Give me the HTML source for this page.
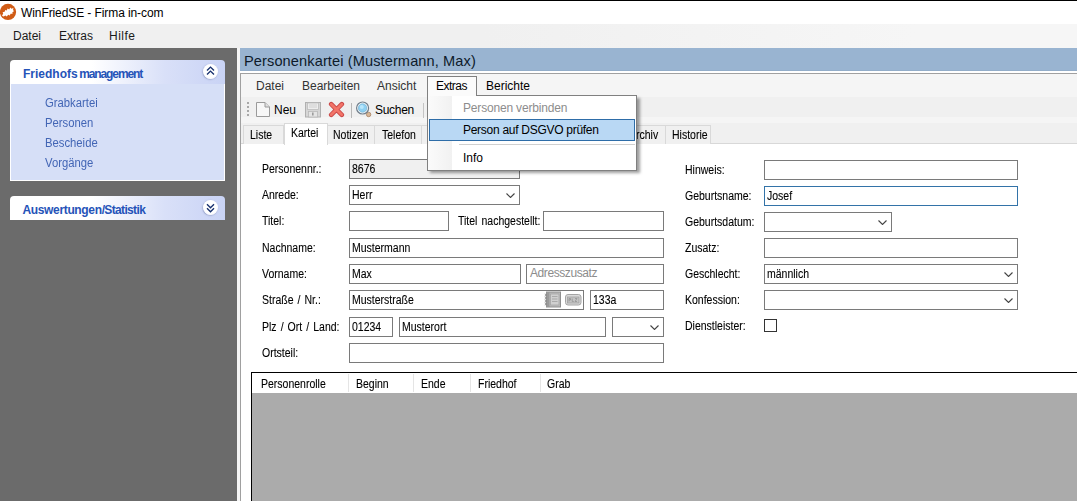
<!DOCTYPE html>
<html><head><meta charset="utf-8">
<style>
*{box-sizing:border-box;margin:0;padding:0}
html,body{width:1077px;height:501px;overflow:hidden;background:#fff;font-family:"Liberation Sans",sans-serif;color:#000}
.a{position:absolute}
.t{position:absolute;white-space:pre;line-height:1}
.ui{font-size:12px;color:#1a1a1a}
.ms{font-size:12px;letter-spacing:0;word-spacing:1.3px;color:#000;transform:scaleX(.875);transform-origin:0 0;-webkit-text-stroke:0.1px #000}
.box{position:absolute;border:1px solid #7a7a7a;background:#fff;height:20px}
.chev{position:absolute;width:9px;height:5px}
</style></head><body>
<!-- title bar -->
<div class="a" style="left:0;top:0;width:1077px;height:1px;background:#000"></div>
<div class="a" style="left:0;top:1px;width:1077px;height:23px;background:#fff"></div>
<svg class="a" style="left:-1px;top:3px" width="19" height="19" viewBox="0 0 19 19">
<circle cx="9" cy="8.9" r="8.1" fill="#d05c16"/>
<path d="M3 12.8 L4.2 10.5 L3.6 9.2 L5.6 8.8 L6.3 7 L7.8 7.6 L8.6 5.6 L10.2 6.4 L11.3 4.6 L12.4 5.8 L14.4 5 L14 7.2 L15.2 8 L13.4 9.2 L13.6 10.8 L11.6 10.8 L10.8 12.4 L9.2 11.8 L7.8 13.4 L6.4 12.6 L4.6 13.6 Z" fill="#fff"/>
</svg>
<div class="t ui" style="left:21px;top:7px;font-size:12px;color:#000;letter-spacing:-0.09px">WinFriedSE - Firma in-com</div>
<!-- main menu -->
<div class="a" style="left:0;top:24px;width:1077px;height:24px;background:linear-gradient(90deg,#f0f0f0 0%,#f0f0f0 45%,#f6f6f6 85%,#f6f6f6 100%)"></div>
<div class="t ui" style="left:13px;top:30px">Datei</div>
<div class="t ui" style="left:59px;top:30px">Extras</div>
<div class="t ui" style="left:109px;top:30px;letter-spacing:0.5px">Hilfe</div>

<!-- left panel -->
<div class="a" style="left:0;top:48px;width:237px;height:453px;background:#6b6b6b"></div>
<div class="a" style="left:237px;top:48px;width:3px;height:453px;background:#f4f4f4"></div>

<!-- panel 1 -->
<div class="a" style="left:10px;top:60px;width:215px;height:24px;border-radius:4px 4px 0 0;background:linear-gradient(90deg,#fff 0%,#fff 38%,#d9e0f8 72%,#c9d3f5 100%)"></div>
<div class="t" style="left:23px;top:68px;font-size:12px;font-weight:bold;color:#2553b8">Friedhofs<span style="letter-spacing:-1.1px;margin-left:1.5px">management</span></div>
<div class="a" style="left:203px;top:64px;width:15px;height:15px;border-radius:50%;background:radial-gradient(circle at 50% 45%,#fff 55%,#eef0fa 100%);box-shadow:-0.5px 0.5px 1.5px rgba(90,100,150,.55)"></div>
<svg class="a" style="left:196px;top:58px" width="30" height="28" viewBox="196 58 30 28"><path d="M207 70.6 L210.5 67.1 L214 70.6 M207 74.6 L210.5 71.1 L214 74.6" stroke="#17306e" stroke-width="1.35" fill="none"/></svg>
<div class="a" style="left:10px;top:84px;width:215px;height:97px;background:#d6dff7;border:1px solid #fff;border-top:none"></div>
<div class="t" style="left:45px;top:97px;font-size:12px;color:#4265b5;transform:scaleX(.94);transform-origin:0 0">Grabkartei</div>
<div class="t" style="left:45px;top:117px;font-size:12px;color:#4265b5;transform:scaleX(.94);transform-origin:0 0">Personen</div>
<div class="t" style="left:45px;top:137px;font-size:12px;color:#4265b5;transform:scaleX(.94);transform-origin:0 0">Bescheide</div>
<div class="t" style="left:45px;top:157px;font-size:12px;color:#4265b5;transform:scaleX(.94);transform-origin:0 0">Vorgänge</div>

<!-- panel 2 -->
<div class="a" style="left:10px;top:196px;width:215px;height:24px;border-radius:4px 4px 0 0;background:linear-gradient(90deg,#fff 0%,#fff 38%,#d9e0f8 72%,#c9d3f5 100%)"></div>
<div class="t" style="left:22.5px;top:204px;font-size:12px;font-weight:bold;color:#2553b8"><span style="letter-spacing:-0.35px">Auswertungen</span><span style="letter-spacing:-0.65px">/Statistik</span></div>
<div class="a" style="left:203px;top:200px;width:15px;height:15px;border-radius:50%;background:radial-gradient(circle at 50% 45%,#fff 55%,#eef0fa 100%);box-shadow:-0.5px 0.5px 1.5px rgba(90,100,150,.55)"></div>
<svg class="a" style="left:196px;top:194px" width="30" height="28" viewBox="196 194 30 28"><path d="M207 204.2 L210.5 207.7 L214 204.2 M207 208.2 L210.5 211.7 L214 208.2" stroke="#17306e" stroke-width="1.35" fill="none"/></svg>

<!-- right: caption -->
<div class="a" style="left:240px;top:48px;width:837px;height:23px;background:#99b4d1"></div>
<div class="t" style="left:244px;top:53.5px;font-size:14.6px;letter-spacing:0.1px;color:#0d1a2a">Personenkartei (Mustermann, Max)</div>
<div class="a" style="left:240px;top:70px;width:837px;height:1px;background:#93adc9"></div>
<div class="a" style="left:240px;top:71px;width:837px;height:2px;background:#fff"></div>
<!-- inner panel -->
<div class="a" style="left:240px;top:73px;width:837px;height:428px;background:#fff;border-left:1px solid #a0a0a0;border-top:1px solid #a0a0a0"></div>
<div class="a" style="left:241px;top:74px;width:836px;height:23px;background:#f5f5f5"></div>
<div class="t ui" style="left:256px;top:80px;color:#333">Datei</div>
<div class="t ui" style="left:302px;top:80px;color:#333">Bearbeiten</div>
<div class="t ui" style="left:377px;top:80px;color:#333">Ansicht</div>
<div class="t ui" style="left:486px;top:80px;color:#000">Berichte</div>
<!-- toolbar -->
<div class="a" style="left:241px;top:97px;width:836px;height:26px;background:#f0f0f0"></div>
<!-- tab strip -->
<div class="a" style="left:241px;top:117px;width:836px;height:8px;background:#f5f5f5"></div>
<div class="a" style="left:241px;top:123px;width:836px;height:21px;background:#f0f0f0"></div>
<div class="a" style="left:241px;top:143px;width:836px;height:1px;background:#d8d8d8"></div>
<!-- content -->
<div class="a" style="left:241px;top:144px;width:836px;height:357px;background:#fff"></div>


<!-- toolbar items -->
<div class="a" style="left:247px;top:102px;width:2px;height:2px;background:#a8a8a8"></div>
<div class="a" style="left:247px;top:106px;width:2px;height:2px;background:#a8a8a8"></div>
<div class="a" style="left:247px;top:110px;width:2px;height:2px;background:#a8a8a8"></div>
<div class="a" style="left:247px;top:114px;width:2px;height:2px;background:#a8a8a8"></div>
<svg class="a" style="left:255px;top:101px" width="16" height="17" viewBox="0 0 16 17">
<path d="M1.5 1.5 H10 L14.5 6 V15.5 H1.5 Z" fill="#f7f7f7" stroke="#9a9a9a"/>
<path d="M10 1.5 V6 H14.5" fill="#e0e0e0" stroke="#9a9a9a"/>
</svg>
<div class="t ui" style="left:274px;top:104px;color:#000">Neu</div>
<svg class="a" style="left:304px;top:101px" width="17" height="17" viewBox="0 0 17 17">
<rect x="1.5" y="1.5" width="15" height="14.5" fill="#d6d6d6" stroke="#b0b0b0"/>
<rect x="3.5" y="2" width="11" height="6.5" fill="#ededed" stroke="#bcbcbc" stroke-width="0.8"/>
<path d="M5 4 H13 M5 6 H13" stroke="#c8c8c8" stroke-width="0.8"/>
<rect x="4.5" y="10.5" width="9" height="5.5" fill="#e4e4e4" stroke="#b8b8b8" stroke-width="0.8"/>
<rect x="8" y="11.5" width="1.6" height="3" fill="#9c9c9c"/>
</svg>
<svg class="a" style="left:328px;top:101px" width="17" height="17" viewBox="0 0 17 17">
<path d="M3.2 3.2 L13.8 13.8 M13.8 3.2 L3.2 13.8" stroke="#c94848" stroke-width="4.6" stroke-linecap="round"/>
<path d="M3.2 3.2 L13.8 13.8 M13.8 3.2 L3.2 13.8" stroke="#f27468" stroke-width="2.8" stroke-linecap="round"/>
</svg>
<div class="a" style="left:351px;top:103px;width:1px;height:15px;background:#b8b8b8"></div>
<svg class="a" style="left:355px;top:101px" width="18" height="18" viewBox="0 0 18 18">
<circle cx="13.6" cy="13.5" r="2.2" fill="#d8b898" stroke="#a88060" stroke-width="0.8"/>
<circle cx="7.6" cy="7" r="6" fill="#fff" stroke="#6f7d8a" stroke-width="1.2"/>
<circle cx="7.6" cy="7" r="4.3" fill="#8ed0f2" stroke="#6aa6c8" stroke-width="0.6"/>
<circle cx="6.8" cy="6" r="2" fill="#b8e6fb"/>
</svg>
<div class="t ui" style="left:375px;top:104px;color:#000;letter-spacing:-0.3px">Suchen</div>
<div class="a" style="left:423px;top:103px;width:1px;height:15px;background:#c4c4c4"></div>

<!-- tabs -->
<div class="a" style="left:243px;top:125px;width:41px;height:19px;background:#f0f0f0;border:1px solid #d9d9d9;border-bottom:none"></div>
<div class="t ms" style="left:250px;top:129px">Liste</div>
<div class="a" style="left:328px;top:125px;width:47px;height:19px;background:#f0f0f0;border:1px solid #d9d9d9;border-bottom:none;border-left:none"></div>
<div class="t ms" style="left:333px;top:129px">Notizen</div>
<div class="a" style="left:375px;top:125px;width:47px;height:19px;background:#f0f0f0;border:1px solid #d9d9d9;border-bottom:none;border-left:none"></div>
<div class="t ms" style="left:382px;top:129px">Telefon</div>
<div class="a" style="left:422px;top:125px;width:244px;height:19px;background:#f0f0f0;border:1px solid #d9d9d9;border-bottom:none;border-left:none"></div>
<div class="t ms" style="left:629px;top:129px">Archiv</div>
<div class="a" style="left:666px;top:125px;width:45px;height:19px;background:#f0f0f0;border:1px solid #d9d9d9;border-bottom:none;border-left:none"></div>
<div class="t ms" style="left:672px;top:129px">Historie</div>
<div class="a" style="left:284px;top:123px;width:44px;height:22px;background:#fff;border:1px solid #d9d9d9;border-bottom:none"></div>
<div class="t ms" style="left:291px;top:127px">Kartei</div>

<!-- left labels -->
<div class="t ms" style="left:262px;top:163px">Personennr.:</div>
<div class="t ms" style="left:262px;top:189px">Anrede:</div>
<div class="t ms" style="left:262px;top:215px">Titel:</div>
<div class="t ms" style="left:262px;top:242px">Nachname:</div>
<div class="t ms" style="left:262px;top:268px">Vorname:</div>
<div class="t ms" style="left:262px;top:294px">Straße / Nr.:</div>
<div class="t ms" style="left:262px;top:321px">Plz / Ort / Land:</div>
<div class="t ms" style="left:262px;top:347px">Ortsteil:</div>
<div class="t ms" style="left:458px;top:215px">Titel nachgestellt:</div>

<div class="box" style="left:349px;top:159px;width:171px;background:#f0f0f0"></div>
<div class="t ms" style="left:352px;top:163px">8676</div>
<div class="box" style="left:349px;top:185px;width:171px"></div>
<div class="t ms" style="left:352px;top:189px">Herr</div>
<svg class="chev" style="left:506px;top:193px" viewBox="0 0 9 5"><path d="M0.5 0.5 L4.5 4.5 L8.5 0.5" stroke="#444" stroke-width="1.1" fill="none"/></svg>
<div class="box" style="left:349px;top:211px;width:100px"></div>
<div class="box" style="left:543px;top:211px;width:121px"></div>
<div class="box" style="left:349px;top:238px;width:315px"></div>
<div class="t ms" style="left:352px;top:242px">Mustermann</div>
<div class="box" style="left:349px;top:264px;width:172px"></div>
<div class="t ms" style="left:352px;top:268px">Max</div>
<div class="box" style="left:526px;top:264px;width:138px"></div>
<div class="t" style="left:530px;top:267px;font-size:12px;color:#8c8c8c;letter-spacing:-0.42px">Adresszusatz</div>
<div class="box" style="left:349px;top:290px;width:235px"></div>
<div class="t ms" style="left:352px;top:294px">Musterstraße</div>
<svg class="a" style="left:544px;top:291px" width="18" height="17" viewBox="0 0 18 17">
<rect x="2.5" y="1" width="14" height="15" fill="#bdbdbd" stroke="#8f8f8f"/>
<rect x="2.5" y="1" width="3" height="15" fill="#9a9a9a"/>
<rect x="6.5" y="3" width="8.5" height="11" fill="#d0d0d0" stroke="#a6a6a6" stroke-width="0.8"/>
<path d="M8 5.5 H13.5 M8 8 H13.5 M8 10.5 H13.5" stroke="#a0a0a0" stroke-width="0.8"/>
<path d="M0.8 3 L2.8 4 L0.8 5 M0.8 6 L2.8 7 L0.8 8 M0.8 9 L2.8 10 L0.8 11 M0.8 12 L2.8 13 L0.8 14" stroke="#8a8a8a" stroke-width="0.9" fill="none"/>
</svg>
<svg class="a" style="left:564px;top:293px" width="18" height="13" viewBox="0 0 18 13">
<rect x="1.5" y="1.5" width="15.5" height="10.5" rx="2.5" fill="#dadada" stroke="#a4a4a4"/>
<rect x="3.5" y="4" width="11.5" height="6" fill="#c4c4c4" stroke="#a0a0a0" stroke-width="0.8"/>
<path d="M5 5.5 V8.5 M5 5.5 H6.5 V7 H5 M8.2 5.5 V8.5 H9.8 M11 5.5 H13 L11 8.5 H13" stroke="#8e8e8e" stroke-width="0.7" fill="none"/>
</svg>
<div class="box" style="left:590px;top:290px;width:74px"></div>
<div class="t ms" style="left:593px;top:294px">133a</div>
<div class="box" style="left:349px;top:317px;width:44px"></div>
<div class="t ms" style="left:352px;top:321px">01234</div>
<div class="box" style="left:399px;top:317px;width:207px"></div>
<div class="t ms" style="left:402px;top:321px">Musterort</div>
<div class="box" style="left:612px;top:317px;width:52px"></div>
<svg class="chev" style="left:650px;top:325px" viewBox="0 0 9 5"><path d="M0.5 0.5 L4.5 4.5 L8.5 0.5" stroke="#444" stroke-width="1.1" fill="none"/></svg>
<div class="box" style="left:349px;top:343px;width:315px"></div>

<!-- right column -->
<div class="t ms" style="left:685px;top:164px">Hinweis:</div>
<div class="t ms" style="left:685px;top:190px">Geburtsname:</div>
<div class="t ms" style="left:685px;top:216px">Geburtsdatum:</div>
<div class="t ms" style="left:685px;top:242px">Zusatz:</div>
<div class="t ms" style="left:685px;top:268px">Geschlecht:</div>
<div class="t ms" style="left:685px;top:294px">Konfession:</div>
<div class="t ms" style="left:685px;top:320px">Dienstleister:</div>
<div class="box" style="left:764px;top:160px;width:254px"></div>
<div class="box" style="left:764px;top:186px;width:254px;border-color:#3373a8"></div>
<div class="t ms" style="left:767px;top:190px">Josef</div>
<div class="box" style="left:764px;top:212px;width:128px"></div>
<svg class="chev" style="left:878px;top:220px" viewBox="0 0 9 5"><path d="M0.5 0.5 L4.5 4.5 L8.5 0.5" stroke="#444" stroke-width="1.1" fill="none"/></svg>
<div class="box" style="left:764px;top:238px;width:254px"></div>
<div class="box" style="left:764px;top:264px;width:254px"></div>
<div class="t ms" style="left:767px;top:268px">männlich</div>
<svg class="chev" style="left:1004px;top:272px" viewBox="0 0 9 5"><path d="M0.5 0.5 L4.5 4.5 L8.5 0.5" stroke="#444" stroke-width="1.1" fill="none"/></svg>
<div class="box" style="left:764px;top:290px;width:254px"></div>
<svg class="chev" style="left:1004px;top:298px" viewBox="0 0 9 5"><path d="M0.5 0.5 L4.5 4.5 L8.5 0.5" stroke="#444" stroke-width="1.1" fill="none"/></svg>
<div class="a" style="left:764px;top:319px;width:13px;height:13px;border:1px solid #333;background:#fff"></div>

<!-- grid -->
<div class="a" style="left:251px;top:372px;width:826px;height:129px;background:#ababab;border-left:1px solid #000;border-top:1px solid #000"></div>
<div class="a" style="left:252px;top:373px;width:825px;height:20px;background:#fff"></div>
<div class="a" style="left:348px;top:374px;width:1px;height:18px;background:#e5e5e5"></div>
<div class="a" style="left:413px;top:374px;width:1px;height:18px;background:#e5e5e5"></div>
<div class="a" style="left:470px;top:374px;width:1px;height:18px;background:#e5e5e5"></div>
<div class="a" style="left:540px;top:374px;width:1px;height:18px;background:#e5e5e5"></div>
<div class="t ms" style="left:261px;top:378px">Personenrolle</div>
<div class="t ms" style="left:356px;top:378px">Beginn</div>
<div class="t ms" style="left:421px;top:378px">Ende</div>
<div class="t ms" style="left:478px;top:378px">Friedhof</div>
<div class="t ms" style="left:547px;top:378px">Grab</div>

<!-- Extras dropdown -->
<div class="a" style="left:427px;top:76px;width:50px;height:21px;background:#fbfbfb;border:1px solid #808080;border-bottom:none"></div>
<div class="t ui" style="left:436px;top:80px;color:#000;letter-spacing:-0.5px">Extras</div>
<div class="a" style="left:430px;top:98px;width:210px;height:75px;background:rgba(0,0,0,.38);filter:blur(1.5px)"></div>
<div class="a" style="left:427px;top:95px;width:210px;height:76px;background:#fff;border:1px solid #808080;border-top:none"></div>
<div class="a" style="left:476px;top:95px;width:161px;height:1px;background:#808080"></div>
<div class="a" style="left:428px;top:96px;width:24px;height:74px;background:linear-gradient(90deg,#fbfbfb,#f1f1f1)"></div>
<div class="a" style="left:428px;top:95px;width:48px;height:1px;background:#fbfbfb"></div>
<div class="t ui" style="left:463px;top:102px;color:#8d8d8d;letter-spacing:-0.18px">Personen verbinden</div>
<div class="a" style="left:429px;top:119px;width:206px;height:22px;background:#b9d8f4;border:1px solid #2e6da8"></div>
<div class="t ui" style="left:463px;top:124px;color:#000;letter-spacing:-0.28px">Person auf DSGVO prüfen</div>
<div class="a" style="left:459px;top:144px;width:176px;height:1px;background:#d0d0d0"></div>
<div class="t ui" style="left:463px;top:152px;color:#000">Info</div>
</body></html>
